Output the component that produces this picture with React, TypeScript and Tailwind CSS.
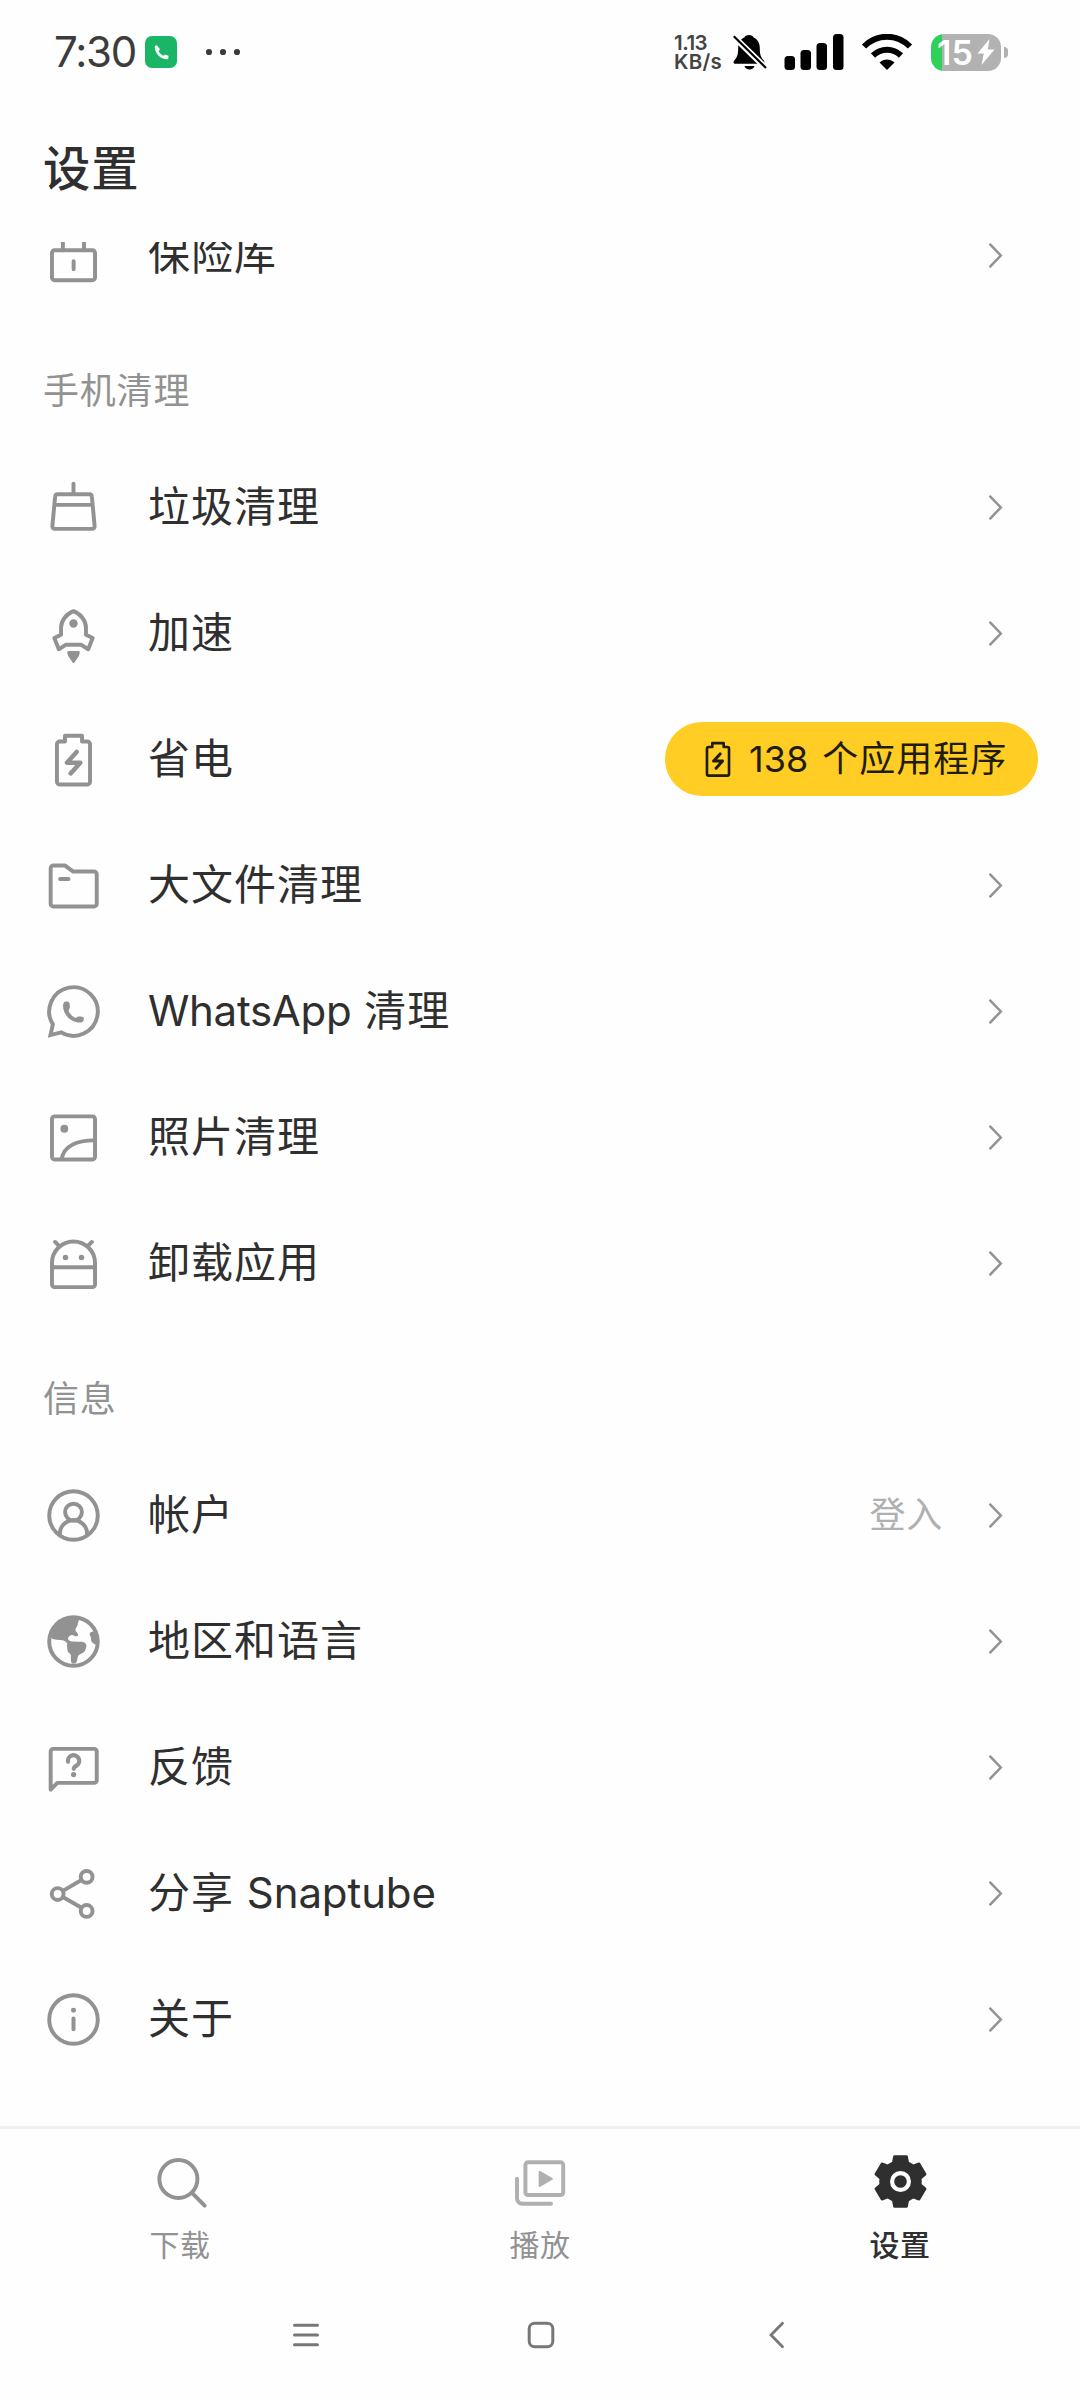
import type { ReactNode } from "react";

function Icon({ children, className = "h-[63px] w-[63px]" }: { children: ReactNode; className?: string }) {
  return (
    <svg
      viewBox="0 0 24 24"
      className={`shrink-0 ${className}`}
      fill="none"
      stroke="currentColor"
      strokeWidth="1.5"
      strokeLinecap="round"
      strokeLinejoin="round"
    >
      {children}
    </svg>
  );
}

const vaultIcon = (
  <Icon>
    <rect x="3.8" y="10" width="16.4" height="11.4" rx="1" />
    <path d="M7.95 5v5M16 5v5M12.05 14.2v3" />
  </Icon>
);

const broomIcon = (
  <Icon>
    <path d="M6 6.95h12a1 1 0 0 1 1 .93l1.05 11.2a1 1 0 0 1-1 1.07H4.95a1 1 0 0 1-1-1.07L5 7.88a1 1 0 0 1 1-.93zM12 2.9v4M4.8 11h14.4" />
  </Icon>
);

const rocketIcon = (
  <Icon>
    <path strokeLinecap="butt" d="M12 3.5C9.3 4.5 7.25 7 7.25 9.8v2.7L4.7 13.7 6.4 18 9 16.3h6l2.6 1.7 1.7-4.3-2.55-1.2V9.8c0-2.8-2.05-5.3-4.75-6.3z" />
    <circle cx="12" cy="8.2" r="1.6" fill="currentColor" stroke="none" />
    <path strokeWidth="1" d="M10.1 19.2h3.8l-.3 1.1L12 22.7l-1.6-2.4z" fill="currentColor" />
  </Icon>
);

const batteryPath = (
  <>
    <path d="M8.75 5.15v-2.2h6.5v2.2h2.05a1 1 0 0 1 1 1V20.5a1 1 0 0 1-1 1H6.7a1 1 0 0 1-1-1V6.15a1 1 0 0 1 1-1z" />
    <path strokeWidth="1.7" d="M13.2 9.1 9.5 13.2h5.1l-3.7 4.1" />
  </>
);

const batteryIcon = <Icon>{batteryPath}</Icon>;

const folderIcon = (
  <Icon>
    <path d="M4.3 4.4h4.5l3.1 2.3h7.95a1 1 0 0 1 1 1V19a1 1 0 0 1-1 1H4.3a1 1 0 0 1-1-1V5.4a1 1 0 0 1 1-1zM6.9 9.5h3.2" />
  </Icon>
);

const whatsappIcon = (
  <Icon>
    <path strokeLinejoin="miter" d="M3.2 21l.95-4.1A9.25 9.25 0 1 1 7.3 19.97z" />
    <path
      stroke="none"
      fill="currentColor"
      d="M9.1 8.2c-.7 0-1.1.8-1.1 1.6 0 3.4 3 6.4 6.4 6.4.9 0 1.5-.5 1.5-1.2v-.6c-.2-.5-1.6-.6-2-.5-.5.1-.9.6-1.3.5-1.1-.6-1.9-1.4-2.4-2.4-.2-.5.3-.9.4-1.4.1-.8 0-1.9-.5-2.2-.3-.2-.6-.2-1-.2z"
    />
  </Icon>
);

const photoIcon = (
  <Icon>
    <rect x="3.8" y="3.95" width="16.4" height="16.4" rx="1" />
    <circle cx="8.5" cy="8.65" r="1.5" fill="currentColor" stroke="none" />
    <path d="M7.5 20C8.5 15.5 12.5 13.1 20 13.1" />
  </Icon>
);

const androidIcon = (
  <Icon>
    <path d="M3.8 13.4v-1.6a8.2 8.2 0 0 1 16.4 0V20a1 1 0 0 1-1 1H4.8a1 1 0 0 1-1-1v-6.6h16.4M5 3.8l1.4 1.4M19 3.8l-1.4 1.4" />
    <circle cx="8.95" cy="9.7" r="1.05" fill="currentColor" stroke="none" />
    <circle cx="15.05" cy="9.7" r="1.05" fill="currentColor" stroke="none" />
  </Icon>
);

const accountIcon = (
  <Icon>
    <circle cx="12" cy="12" r="9.25" />
    <circle cx="12" cy="10.7" r="3.2" />
    <path d="M6.8 19.2v-.2a5.2 5.2 0 0 1 10.4 0v.2" />
  </Icon>
);

const globeIcon = (
  <Icon>
    <circle cx="12" cy="12" r="9.25" />
    <path
      stroke="none"
      fill="currentColor"
      d="M3.05 9.7 4 11l1.6.3 2.2.2c.9.1 1.4.7 1.9 1.3-.3.5-.2 1-.1 1.6.1.8.1 1.4.5 1.8.5.4.9.6.9 1.3v1.8c0 .6.4 1.1 1 1.1.7 0 1.1-.3 1.3-1 .3-.7.1-1.4.6-2.1.7-.8 2.1-.8 2.6-2.1.3-.8.6-1.6.3-2.1-.4-.9-1.2-1-2.2-1l-3-.1c-.8 0-1.6-.2-1.7-1 0-.8.7-1.4 1.4-1.5.7-.1 1.7 1 2.3.3.5-.6-.3-1.2-.7-1.7-.4-.6 0-1.2.5-1.9.4-.5 0-.8.4-1.4l.5-1.8-2.6-.4C7 2.5 3 6 3.05 9.7zM21 8l-2 .3c-.8.2-1 .9-.7 1.4.6.7.1 1.7.7 2.5.4.5.9.8 1.5 1z"
    />
  </Icon>
);

const feedbackIcon = (
  <Icon>
    <path d="M3.3 20.4V5.9a1 1 0 0 1 1-1h15.55a1 1 0 0 1 1 1v10.95a1 1 0 0 1-1 1H5.85z" />
    <path strokeWidth="1.6" d="M9.9 9.8a2.15 2.15 0 1 1 3.4 1.4c-.8.5-1.2.8-1.2 1.3" />
    <circle cx="12.05" cy="14.7" r="1" fill="currentColor" stroke="none" />
  </Icon>
);

const shareIcon = (
  <Icon>
    <circle cx="17" cy="5.65" r="2.25" />
    <circle cx="5.97" cy="12.2" r="2.25" />
    <circle cx="17" cy="18.65" r="2.25" />
    <path d="M7.95 11l7.1-4.15M7.95 13.35l7.1 4.1" />
  </Icon>
);

const aboutIcon = (
  <Icon>
    <circle cx="12" cy="12" r="9.25" />
    <circle cx="12" cy="8.5" r=".95" fill="currentColor" stroke="none" />
    <path d="M12 11.6v4.1" />
  </Icon>
);

function Chevron() {
  return (
    <svg viewBox="0 0 14 26" className="h-[26px] w-[14px]" fill="none" stroke="#929292" strokeWidth="2.5">
      <path d="M.6 1.8 11.8 13.5.6 25.2" />
    </svg>
  );
}

function Row({ icon, label, right }: { icon: ReactNode; label: ReactNode; right?: ReactNode }) {
  return (
    <li className="flex h-[126px] items-center pl-[42px] pr-[77px] text-[#929292]">
      {icon}
      <span className="ml-[43px] flex-1 text-[42px] leading-[60px] tracking-[1px] text-[#2f2f2f]">{label}</span>
      {right}
      <Chevron />
    </li>
  );
}

function SectionTitle({ children }: { children: ReactNode }) {
  return (
    <h2 className="flex h-[126px] items-center pl-[43px] pt-[20px] text-[36px] leading-[52px] tracking-[0.8px] text-[#929292]">
      {children}
    </h2>
  );
}

function StatusBar() {
  return (
    <div className="flex h-[104px] items-center pl-[54px]">
      <span className="w-[91px] text-[42px] leading-none tracking-[-1.2px] text-[#3c3c3c]">7:30</span>
      <span className="flex h-8 w-8 items-center justify-center rounded-[7px] bg-[#1bb566]">
        <svg viewBox="0 0 24 24" className="h-[19px] w-[19px]" fill="#fff">
          <path d="M6.5 3.2 3.6 3.6C3 13.4 10.6 21 20.4 20.6l.5-4.6-4.3-1.6-2.3 1.7c-2.6-1.2-4.8-3.4-6-6l1.8-2.3z" />
        </svg>
      </span>
      <svg viewBox="0 0 36 8" className="ml-[28px] h-2 w-9" fill="#3c3c3c">
        <circle cx="4" cy="4" r="3.1" />
        <circle cx="18" cy="4" r="3.1" />
        <circle cx="32" cy="4" r="3.1" />
      </svg>
      <div className="ml-[433px] w-[59px] text-[20.5px] font-semibold leading-[19px] text-[#444]">
        <div className="tracking-[-0.5px]">1.13</div>
        <div className="tracking-[0.3px]">KB/s</div>
      </div>
      {/* muted bell */}
      <svg viewBox="0 0 34 36" className="h-9 w-[34px]">
        <path
          d="M16 1c-2.5 0-4 1-4.7 2.6C7.2 5.500 5.200 9.600 5.200 14c0 7-1.200 9.500-4 12.500-1.200 1.500-.8 3.300 1 3.300h27.600c1.800 0 2.200-1.800 1-3.300-2.800-3-4-5.500-4-12.500 0-4.400-2-8.500-6.100-10.400C20 2 18.500 1 16 1zM11.500 32h10c-.5 2.200-2.500 3.600-5 3.600s-4.500-1.400-5-3.600z"
          fill="#000"
        />
        <path d="M-1 1 34 35" stroke="#fefefe" strokeWidth="6" />
        <path d="M.8 2.3 33 34" stroke="#000" strokeWidth="2.2" />
      </svg>
      <svg viewBox="0 0 60 36" className="ml-[17px] h-9 w-[60px]">
        <rect x=".5" y="22" width="10.5" height="14" rx="3.5" />
        <rect x="16.5" y="16" width="10.5" height="20" rx="3.5" />
        <rect x="32.5" y="9" width="10.5" height="27" rx="3.5" />
        <rect x="49" y="0" width="10.5" height="36" rx="3.5" />
      </svg>
      <svg viewBox="0 0 52 36" className="ml-[17px] h-9 w-[52px]">
        <path d="M3 12.5C16-.5 36-.5 49 12.5" fill="none" stroke="#000" strokeWidth="6" />
        <path d="M12 21.5c8-7.7 20-7.7 28 0" fill="none" stroke="#000" strokeWidth="6" />
        <path d="M18.5 28.5c4.500-4 10.500-4 15 0L26 36z" />
      </svg>
      <div className="ml-[18px] flex h-[37px] w-[70px] items-center rounded-[13px] bg-[linear-gradient(to_right,#30d158_0_11px,#b2b2b2_11px)] pl-[6px]">
        <span className="w-[40px] text-[34px] font-semibold leading-[37px] text-white">15</span>
        <svg viewBox="0 0 18 26" className="h-[26px] w-[18px] shrink-0" fill="#fff">
          <path d="M12.5 0 .5 14.5h6.300L4.500 26 17.500 10.500h-6.700z" />
        </svg>
      </div>
      <div className="ml-[3px] h-[11px] w-[4px] rounded-r-full bg-[#b2b2b2]" />
    </div>
  );
}

function TabBar() {
  return (
    <nav className="mt-[44px] grid h-[144px] grid-cols-3 border-t-[3px] border-[#f1f1f1] pt-[21px] text-[30px] leading-[42px] tracking-[0.6px] text-[#929292]">
      <a className="flex flex-col items-center">
        <Icon>
          <circle cx="11.2" cy="11.05" r="7.25" />
          <path d="M16.5 16.4l4.7 4.8" />
        </Icon>
        <span className="mt-[11px]">下载</span>
      </a>
      <a className="flex flex-col items-center">
        <Icon className="h-[63px] w-[63px] text-[#b0b0b0]">
          <rect x="6.25" y="4.7" width="14.4" height="12.45" rx="1" />
          <path d="M3.05 10.9v7.5a2 2 0 0 0 2 2.05H16" />
          <path d="M11.7 8.3v5.4l4.6-2.7z" fill="currentColor" strokeWidth=".8" />
        </Icon>
        <span className="mt-[11px]">播放</span>
      </a>
      <a className="flex flex-col items-center text-[#2f2f2f]">
        <Icon>
          <circle cx="12" cy="12" r="8.1" fill="currentColor" stroke="none" />
          {[0, 60, 120, 180, 240, 300].map((deg) => (
            <path
              key={deg}
              d="M9.7 2.5h4.6l.6 3.2H9.1z"
              fill="currentColor"
              strokeWidth="1"
              transform={`rotate(${deg} 12 12)`}
            />
          ))}
          <circle cx="12" cy="12" r="3.2" stroke="#fefefe" strokeWidth="1.6" />
        </Icon>
        <span className="mt-[11px] font-medium">设置</span>
      </a>
    </nav>
  );
}

function SystemNav() {
  return (
    <div className="ml-[188px] mt-[41px] grid h-[48px] w-[707px] grid-cols-3 items-center justify-items-center text-[#777]">
      <svg viewBox="0 0 28 28" className="h-7 w-7" stroke="currentColor" strokeWidth="3" strokeLinecap="round">
        <path d="M2.5 4.3h23M2.5 14h23M2.5 23.7h23" />
      </svg>
      <svg viewBox="0 0 28 28" className="h-7 w-7" fill="none" stroke="currentColor" strokeWidth="3">
        <rect x="2.2" y="2.2" width="23.6" height="23.6" rx="5.5" />
      </svg>
      <svg viewBox="0 0 28 28" className="h-7 w-7" fill="none" stroke="currentColor" strokeWidth="2.8" strokeLinecap="round">
        <path d="M19.5 2.2 8 14l11.5 11.8" />
      </svg>
    </div>
  );
}

export default function App() {
  return (
    <div className="h-[2400px] w-[1080px] overflow-hidden bg-[#fefefe] font-['Inter','Noto_Sans_CJK_SC',sans-serif]">
      <StatusBar />
      <h1 className="h-[138px] pl-[43px] pt-[35px] text-[47.25px] font-medium leading-[60px] tracking-[1px] text-[#2f2f2f]">
        设置
      </h1>

      {/* Scrolled list */}
      <main className="h-[1840px] overflow-hidden">
        <ul className="-mt-[50px]">
          <Row icon={vaultIcon} label="保险库" />
        </ul>

        <SectionTitle>手机清理</SectionTitle>
        <ul>
          <Row icon={broomIcon} label="垃圾清理" />
          <Row icon={rocketIcon} label="加速" />
          <li className="flex h-[126px] items-center pl-[42px] pr-[42px] text-[#929292]">
            {batteryIcon}
            <span className="ml-[43px] flex-1 text-[42px] leading-[60px] tracking-[1px] text-[#2f2f2f]">省电</span>
            <span className="flex h-[74px] w-[373px] items-center rounded-full bg-[#ffcd23] pl-[32px] text-[36px] text-[#1f1c0a]">
              <Icon className="h-[42px] w-[42px]">{batteryPath}</Icon>
              <span className="ml-[10px] whitespace-nowrap leading-[52px]">138</span>
              <span className="ml-[14px] whitespace-nowrap leading-[52px] tracking-[1px]">个应用程序</span>
            </span>
          </li>
          <Row icon={folderIcon} label="大文件清理" />
          <Row icon={whatsappIcon} label={<><span className="tracking-[-0.3px]">WhatsApp</span> 清理</>} />
          <Row icon={photoIcon} label="照片清理" />
          <Row icon={androidIcon} label="卸载应用" />
        </ul>

        <SectionTitle>信息</SectionTitle>
        <ul>
          <Row
            icon={accountIcon}
            label="帐户"
            right={
              <span className="mr-[46px] text-[36px] leading-[52px] tracking-[0.8px] text-[#b0b0b0]">登入</span>
            }
          />
          <Row icon={globeIcon} label="地区和语言" />
          <Row icon={feedbackIcon} label="反馈" />
          <Row icon={shareIcon} label={<>分享 <span className="tracking-[-0.1px]">Snaptube</span></>} />
          <Row icon={aboutIcon} label="关于" />
        </ul>
      </main>

      <TabBar />
      <SystemNav />
    </div>
  );
}
